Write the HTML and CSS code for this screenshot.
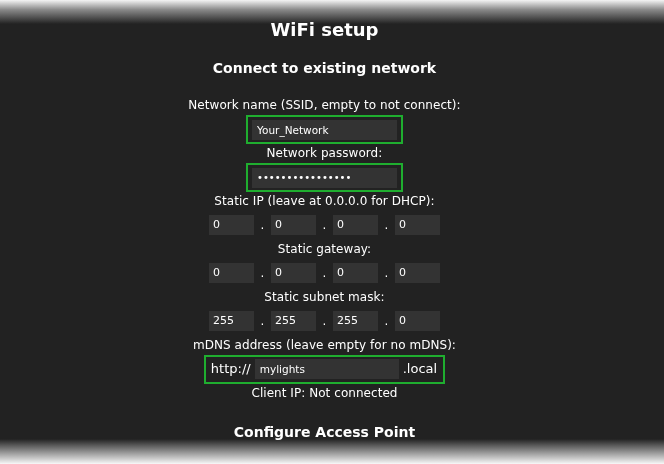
FILE: index.html
```html
<!DOCTYPE html>
<html>
<head>
<meta charset="utf-8">
<link rel="stylesheet" href="styles.css">
</head>
<body>
<div class="fade top"></div>
<div class="fade bottom"></div>
<div class="page">
  <h2 class="title">WiFi setup</h2>
  <h3 class="subtitle">Connect to existing network</h3>
  <div class="label">Network name (SSID, empty to not connect):</div>
  <div class="row"><div class="hl"><div class="inp wide">Your_Network</div></div></div>
  <div class="label">Network password:</div>
  <div class="row"><div class="hl"><div class="inp wide pw">&#8226;&#8226;&#8226;&#8226;&#8226;&#8226;&#8226;&#8226;&#8226;&#8226;&#8226;&#8226;&#8226;&#8226;&#8226;&#8226;</div></div></div>
  <div class="label">Static IP (leave at 0.0.0.0 for DHCP):</div>
  <div class="row ip"><div class="inp oct">0</div><span class="dot">.</span><div class="inp oct">0</div><span class="dot">.</span><div class="inp oct">0</div><span class="dot">.</span><div class="inp oct">0</div></div>
  <div class="label">Static gateway:</div>
  <div class="row ip"><div class="inp oct">0</div><span class="dot">.</span><div class="inp oct">0</div><span class="dot">.</span><div class="inp oct">0</div><span class="dot">.</span><div class="inp oct">0</div></div>
  <div class="label">Static subnet mask:</div>
  <div class="row ip"><div class="inp oct">255</div><span class="dot">.</span><div class="inp oct">255</div><span class="dot">.</span><div class="inp oct">255</div><span class="dot">.</span><div class="inp oct">0</div></div>
  <div class="label">mDNS address (leave empty for no mDNS):</div>
  <div class="row"><div class="hl mdns"><span class="pre">http://</span><div class="inp mid">mylights</div><span class="post">.local</span></div></div>
  <div class="label">Client IP: Not connected</div>
  <h3 class="subtitle ap">Configure Access Point</h3>
</div>
</body>
</html>
```
FILE: styles.css
```css
html, body {
  margin: 0;
  padding: 0;
  background: #222;
  color: #fff;
  font-family: "DejaVu Sans", Verdana, sans-serif;
  font-size: 12px;
  overflow: hidden;
}
.page {
  position: relative;
  z-index: 1;
  width: 649px;
  display: flex;
  flex-direction: column;
  align-items: center;
  padding-top: 18px;
}
.title {
  margin: 0;
  font-size: 18px;
  line-height: 24px;
  font-weight: bold;
}
.subtitle {
  margin: 14px 0 0 0;
  font-size: 14px;
  line-height: 24px;
  font-weight: bold;
}
.subtitle.ap {
  margin-top: 15px;
}
.label {
  line-height: 24px;
  height: 24px;
  letter-spacing: 0.05px;
}
.subtitle + .label {
  margin-top: 13px;
}
.row {
  display: flex;
  align-items: center;
  justify-content: center;
  height: 24px;
}
.hl {
  border: 2px solid #1fae2f;
  padding: 3px 4px 2px 4px;
  display: flex;
  align-items: center;
}
.inp {
  background: #333;
  color: #fff;
  height: 20px;
  line-height: 20px;
  box-sizing: border-box;
  font-size: 10.5px;
  text-align: left;
  padding-left: 5px;
}
.wide { width: 145px; }
.pw { font-size: 10px; }
.oct {
  width: 45px;
  padding-left: 4px;
  font-size: 11px;
}
.dot {
  width: 17px;
  text-align: center;
  font-size: 12px;
}
.mdns {
  padding: 2px 6px 3px 5px;
  gap: 4px;
}
.pre, .post { font-size: 13px; line-height: 20px; }
.mid { width: 144px; }
.fade {
  position: fixed;
  left: 0;
  right: 0;
  pointer-events: none;
}
.fade.top {
  top: 0;
  height: 24px;
  background: linear-gradient(to bottom, #f4f4f4 0%, #8a8a8a 40%, #222 100%);
}
.fade.bottom {
  bottom: 0;
  height: 25px;
  background: linear-gradient(to top, #f8f8f8 0%, #999 45%, #222 100%);
}
```
